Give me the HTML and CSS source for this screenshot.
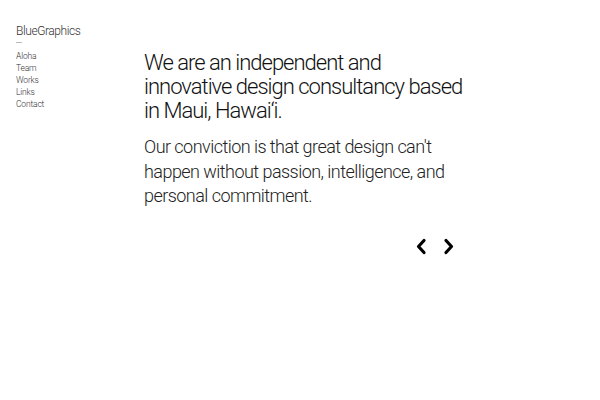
FILE: index.html
```html
<!DOCTYPE html>
<html>
<head>
<meta charset="utf-8">
<link rel="stylesheet" href="styles.css">
</head>
<body>
<div class="page">
  <aside class="side">
    <div class="brand">BlueGraphics</div>
    <div class="dash"></div>
    <nav class="nav">
      <a>Aloha</a>
      <a>Team</a>
      <a>Works</a>
      <a>Links</a>
      <a>Contact</a>
    </nav>
  </aside>
  <main class="main">
    <h1 class="lead">We are an independent and innovative design consultancy based in Maui, Hawai‘i.</h1>
    <p class="body">Our conviction is that great design can't happen without passion, intelligence, and personal commitment.</p>
    <div class="arrows">
      <svg class="arrow" width="12" height="17" viewBox="0 0 12 17"><path d="M9 2.5 L3.5 8.5 L9 14.5" fill="none" stroke="#000" stroke-width="3.2" stroke-linecap="round" stroke-linejoin="round"/></svg>
      <svg class="arrow" width="12" height="17" viewBox="0 0 12 17"><path d="M3 2.5 L8.5 8.5 L3 14.5" fill="none" stroke="#000" stroke-width="3.2" stroke-linecap="round" stroke-linejoin="round"/></svg>
    </div>
  </main>
</div>
</body>
</html>
```
FILE: styles.css
```css
html, body { margin: 0; padding: 0; background: #fff; }
body { font-family: Roboto, "Liberation Sans", Arial, sans-serif; font-weight: 300; color: #222; }
.page { display: flex; padding: 23px 0 0 16px; }
.side { width: 128px; flex: none; }
.brand { font-size: 12px; line-height: 16px; letter-spacing: -0.035em; color: #333; }
.dash { width: 6px; height: 1px; background: #bbb; margin: 3px 0 7px; }
.nav { display: flex; flex-direction: column; }
.nav a { font-size: 8.5px; line-height: 12px; letter-spacing: -0.02em; color: #333; }
.main { width: 324px; padding-top: 28px; }
.lead { margin: 0; font-weight: 300; font-size: 22px; line-height: 24px; letter-spacing: -0.045em; color: #111; }
.body { margin: 12px 0 0; font-size: 18px; line-height: 24.5px; letter-spacing: -0.03em; color: #222; }
.arrows { display: flex; justify-content: flex-end; gap: 16px; padding: 29px 13px 0 0; }
.arrow { display: block; }
```
